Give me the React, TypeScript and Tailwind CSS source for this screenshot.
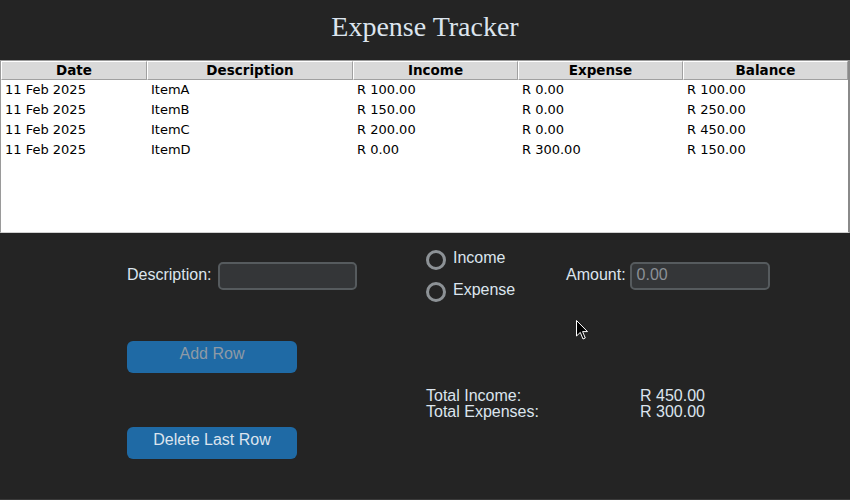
const rows = [
  { date: "11 Feb 2025", desc: "ItemA", income: "R 100.00", expense: "R 0.00", balance: "R 100.00" },
  { date: "11 Feb 2025", desc: "ItemB", income: "R 150.00", expense: "R 0.00", balance: "R 250.00" },
  { date: "11 Feb 2025", desc: "ItemC", income: "R 200.00", expense: "R 0.00", balance: "R 450.00" },
  { date: "11 Feb 2025", desc: "ItemD", income: "R 0.00", expense: "R 300.00", balance: "R 150.00" },
];

const headers = ["Date", "Description", "Income", "Expense", "Balance"];

function Radio({ label }: { label: string }) {
  return (
    <div className="flex items-center gap-[7px] h-[20px]">
      <span className="w-[20px] h-[20px] rounded-full border-[3px] border-[#8d9296]" />
      <span className="-mt-[4px]">{label}</span>
    </div>
  );
}

export default function App() {
  return (
    <div className="relative w-[850px] h-[500px] bg-[#242424] text-[#dce4ee] overflow-hidden border-b border-[#3a3a3a]">
      <div className="h-[60px] flex items-center justify-center pb-[7px]">
        <h1 className="text-[28px] text-[#dce4ee] font-['Liberation_Serif',serif]">Expense Tracker</h1>
      </div>

      <div className="h-[173px] bg-white border border-[#9a9a9a] border-r-2 border-r-[#8a8a8a] border-b-[#d0d0d0] text-black text-[13px] font-['DejaVu_Sans',sans-serif]">
        <div className="grid grid-cols-[146px_206px_165px_165px_165px]">
          {headers.map((h) => (
            <div
              key={h}
              className="h-[19px] leading-[17px] bg-[#d9d9d9] border-t border-l border-white border-r border-b border-r-[#a0a0a0] border-b-[#a0a0a0] text-center font-bold text-[13.5px]"
            >
              {h}
            </div>
          ))}
          {rows.map((r, i) => (
            <div key={i} className="contents">
              <div className="h-[20px] leading-[20px] pl-[4px]">{r.date}</div>
              <div className="h-[20px] leading-[20px] pl-[4px]">{r.desc}</div>
              <div className="h-[20px] leading-[20px] pl-[4px]">{r.income}</div>
              <div className="h-[20px] leading-[20px] pl-[4px]">{r.expense}</div>
              <div className="h-[20px] leading-[20px] pl-[4px]">{r.balance}</div>
            </div>
          ))}
        </div>
      </div>

      <div className="pl-[127px] pt-[16px] text-[16px] font-['Liberation_Sans',Arial,sans-serif]">
        <div className="flex items-center h-[54px]">
          <div className="w-[299px] flex items-center">
            <span className="-mt-[3px] w-[91px]">Description:</span>
            <div className="w-[139px] h-[28px] rounded-[5px] border-2 border-[#565b5e] bg-[#343638]" />
          </div>
          <div className="w-[140px] flex flex-col gap-[12px]">
            <Radio label="Income" />
            <Radio label="Expense" />
          </div>
          <div className="flex items-center gap-[4px]">
            <span className="-mt-[3px]">Amount:</span>
            <div className="w-[140px] h-[28px] rounded-[5px] border-2 border-[#565b5e] bg-[#343638] pl-[5px] leading-[21px] text-[#8b9096]">
              0.00
            </div>
          </div>
        </div>

        <div className="flex">
          <div className="w-[299px] flex flex-col">
            <button className="mt-[38px] w-[170px] h-[32px] rounded-[6px] bg-[#1f6aa5] text-[#8e9aa6] leading-[26px] pb-[6px]">
              Add Row
            </button>
            <button className="mt-[54px] w-[170px] h-[32px] rounded-[6px] bg-[#1f6aa5] text-[#dce4ee] leading-[26px] pb-[6px]">
              Delete Last Row
            </button>
          </div>
          <div className="mt-[85px] leading-[16px]">
            <div className="flex">
              <span className="w-[214px]">Total Income:</span>
              <span>R 450.00</span>
            </div>
            <div className="flex">
              <span className="w-[214px]">Total Expenses:</span>
              <span>R 300.00</span>
            </div>
          </div>
        </div>
      </div>

      <svg className="absolute left-[576px] top-[320px]" width="13" height="21" viewBox="0 0 13 21">
        <path d="M0.5 0.5 L0.5 16 L4.3 12.4 L7 19 L9.3 18 L6.6 11.6 L11.5 11.6 Z" fill="#000" stroke="#fff" strokeWidth="1" />
      </svg>
    </div>
  );
}
